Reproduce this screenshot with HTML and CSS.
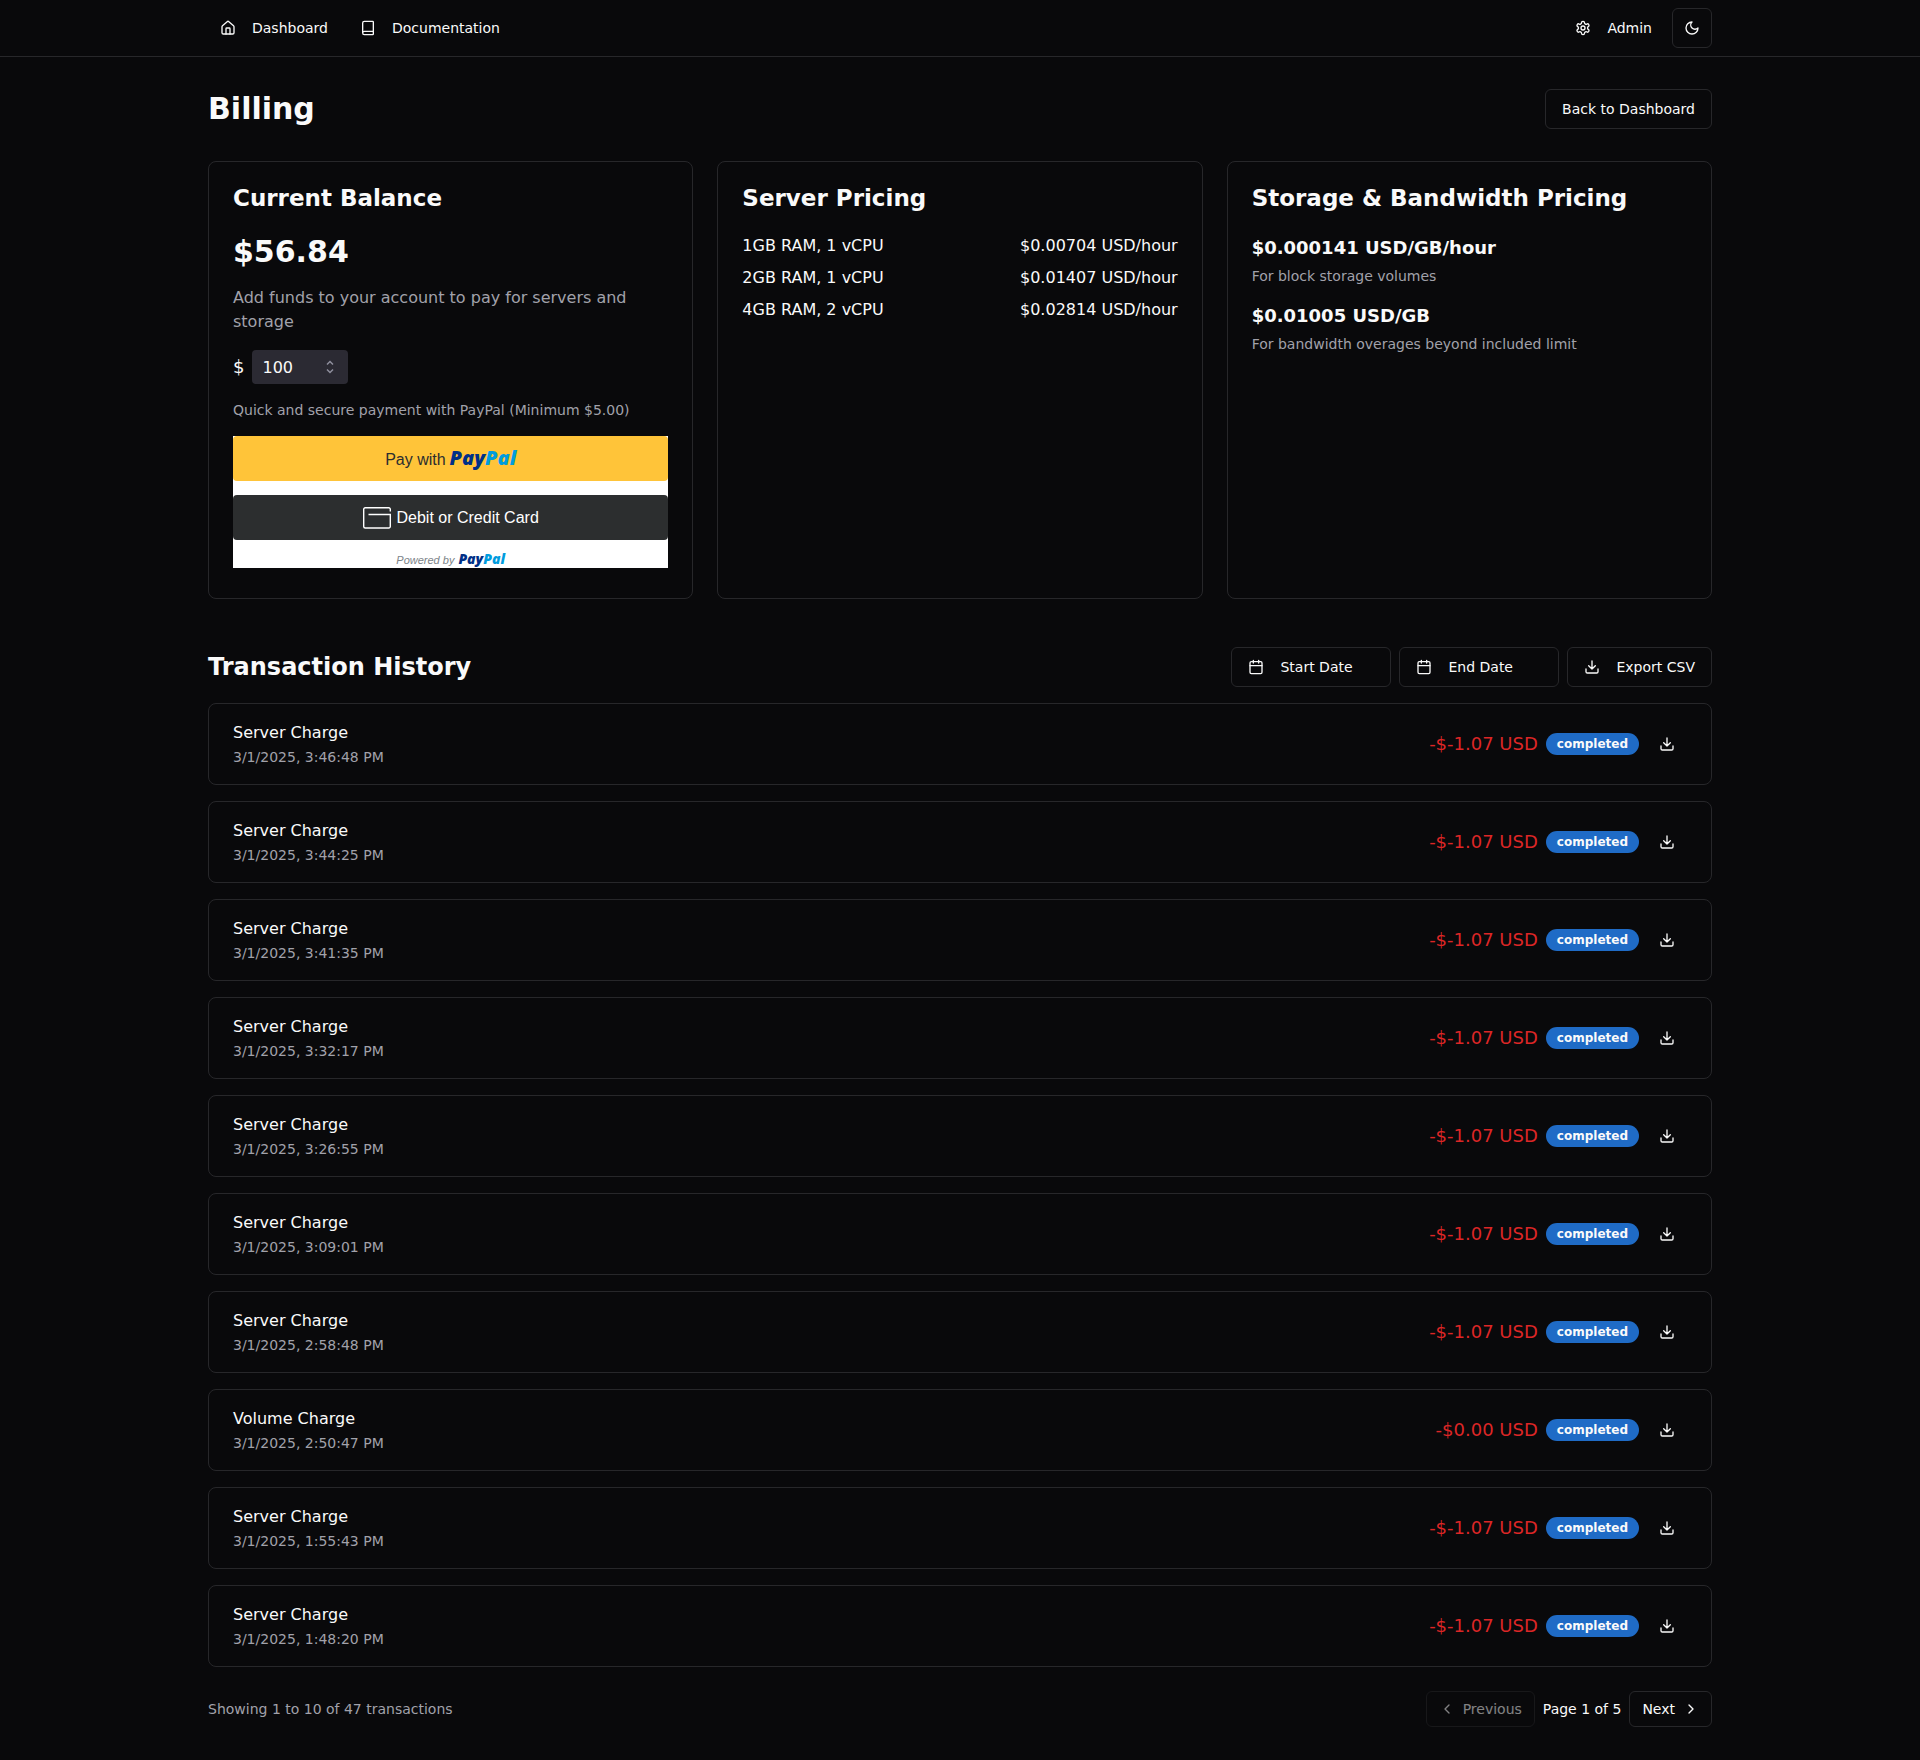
FILE: index.html
```html
<!DOCTYPE html>
<html lang="en">
<head>
<meta charset="utf-8">
<meta name="viewport" content="width=device-width, initial-scale=1">
<title>Billing</title>
<link rel="stylesheet" href="styles.css">
</head>
<body>
<svg class="sprite" aria-hidden="true">
  <symbol id="i-house" viewBox="0 0 24 24"><path d="M15 21v-8a1 1 0 0 0-1-1h-4a1 1 0 0 0-1 1v8"/><path d="M3 10a2 2 0 0 1 .709-1.528l7-5.999a2 2 0 0 1 2.582 0l7 5.999A2 2 0 0 1 21 10v9a2 2 0 0 1-2 2H5a2 2 0 0 1-2-2z"/></symbol>
  <symbol id="i-book" viewBox="0 0 24 24"><path d="M4 19.500v-15A2.500 2.500 0 0 1 6.500 2H19a1 1 0 0 1 1 1v18a1 1 0 0 1-1 1H6.500a1 1 0 0 1 0-5H20"/></symbol>
  <symbol id="i-settings" viewBox="0 0 24 24"><path d="M12.220 2h-.44a2 2 0 0 0-2 2v.18a2 2 0 0 1-1 1.730l-.43.25a2 2 0 0 1-2 0l-.15-.08a2 2 0 0 0-2.730.73l-.22.38a2 2 0 0 0 .73 2.730l.15.1a2 2 0 0 1 1 1.720v.51a2 2 0 0 1-1 1.740l-.15.09a2 2 0 0 0-.73 2.730l.22.38a2 2 0 0 0 2.730.73l.15-.08a2 2 0 0 1 2 0l.43.25a2 2 0 0 1 1 1.730V20a2 2 0 0 0 2 2h.44a2 2 0 0 0 2-2v-.18a2 2 0 0 1 1-1.730l.43-.25a2 2 0 0 1 2 0l.15.08a2 2 0 0 0 2.730-.73l.22-.39a2 2 0 0 0-.73-2.730l-.15-.08a2 2 0 0 1-1-1.740v-.5a2 2 0 0 1 1-1.740l.15-.09a2 2 0 0 0 .73-2.730l-.22-.38a2 2 0 0 0-2.730-.73l-.15.08a2 2 0 0 1-2 0l-.43-.25a2 2 0 0 1-1-1.730V4a2 2 0 0 0-2-2z"/><circle cx="12" cy="12" r="3"/></symbol>
  <symbol id="i-moon" viewBox="0 0 24 24"><path d="M12 3a6 6 0 0 0 9 9 9 9 0 1 1-9-9Z"/></symbol>
  <symbol id="i-calendar" viewBox="0 0 24 24"><path d="M8 2v4M16 2v4M3 10h18"/><rect x="3" y="4" width="18" height="18" rx="2"/></symbol>
  <symbol id="i-download" viewBox="0 0 24 24"><path d="M21 15v4a2 2 0 0 1-2 2H5a2 2 0 0 1-2-2v-4M7 10l5 5 5-5M12 15V3"/></symbol>
  <symbol id="i-left" viewBox="0 0 24 24"><path d="m15 18-6-6 6-6"/></symbol>
  <symbol id="i-right" viewBox="0 0 24 24"><path d="m9 18 6-6-6-6"/></symbol>
</svg>

<header class="topbar">
  <nav class="container topbar-inner" aria-label="Main">
    <a class="nav-link" href="#"><svg class="icon"><use href="#i-house"/></svg>Dashboard</a>
    <a class="nav-link" href="#"><svg class="icon"><use href="#i-book"/></svg>Documentation</a>
    <a class="nav-link push" href="#"><svg class="icon"><use href="#i-settings"/></svg>Admin</a>
    <button class="btn btn-icon" type="button" aria-label="Toggle theme"><svg class="icon"><use href="#i-moon"/></svg></button>
  </nav>
</header>

<main class="container main">
  <div class="page-head">
    <h1>Billing</h1>
    <a class="btn" href="#">Back to Dashboard</a>
  </div>

  <div class="cards">
    <section class="card">
      <h2 class="card-title">Current Balance</h2>
      <div class="stack">
        <p class="balance">$56.84</p>
        <p class="muted">Add funds to your account to pay for servers and storage</p>
        <div class="amount-row">
          <label class="currency" for="amount">$</label>
          <div class="amount-box">
            <input id="amount" class="amount-input" type="number" value="100" min="5">
            <svg class="spinner" viewBox="0 0 8 14" aria-hidden="true"><path d="M1 4.500l3-3 3 3M1 9.500l3 3 3-3"/></svg>
          </div>
        </div>
        <p class="muted small">Quick and secure payment with PayPal (Minimum $5.00)</p>
        <div class="paypal">
          <button class="pp-btn pp-gold" type="button">Pay with <span class="pp-logo"><span class="pp-navy">Pay</span><span class="pp-sky">Pal</span></span></button>
          <button class="pp-btn pp-dark" type="button"><svg class="pp-card" viewBox="0 0 28 22" aria-hidden="true"><path d="M5.500 7.500H27.300V19.500a1.500 1.500 0 0 1-1.500 1.500H2.200A1.500 1.500 0 0 1 .700 19.500V2.200A1.500 1.500 0 0 1 2.200 .700H25.800a1.500 1.500 0 0 1 1.500 1.500V4.500"/></svg>Debit or Credit Card</button>
          <p class="pp-powered">Powered by <span class="pp-logo pp-logo-small"><span class="pp-navy">Pay</span><span class="pp-sky">Pal</span></span></p>
        </div>
      </div>
    </section>

    <section class="card">
      <h2 class="card-title">Server Pricing</h2>
      <dl class="prices">
        <div><dt>1GB RAM, 1 vCPU</dt><dd>$0.00704 USD/hour</dd></div>
        <div><dt>2GB RAM, 1 vCPU</dt><dd>$0.01407 USD/hour</dd></div>
        <div><dt>4GB RAM, 2 vCPU</dt><dd>$0.02814 USD/hour</dd></div>
      </dl>
    </section>

    <section class="card">
      <h2 class="card-title">Storage &amp; Bandwidth Pricing</h2>
      <div class="stack">
        <div class="rate"><p class="rate-value">$0.000141 USD/GB/hour</p><p class="muted small">For block storage volumes</p></div>
        <div class="rate"><p class="rate-value">$0.01005 USD/GB</p><p class="muted small">For bandwidth overages beyond included limit</p></div>
      </div>
    </section>
  </div>

  <section class="history">
    <div class="history-head">
      <h2>Transaction History</h2>
      <div class="actions">
        <button class="btn btn-date" type="button"><svg class="icon"><use href="#i-calendar"/></svg>Start Date</button>
        <button class="btn btn-date" type="button"><svg class="icon"><use href="#i-calendar"/></svg>End Date</button>
        <button class="btn" type="button"><svg class="icon"><use href="#i-download"/></svg>Export CSV</button>
      </div>
    </div>

    <ul class="list">
      <li class="tx"><div class="tx-info"><p>Server Charge</p><p class="muted small">3/1/2025, 3:46:48 PM</p></div><div class="tx-side"><span class="tx-amount">-$-1.07 USD</span><span class="badge">completed</span><button class="btn-ghost" type="button" aria-label="Download invoice"><svg class="icon"><use href="#i-download"/></svg></button></div></li>
      <li class="tx"><div class="tx-info"><p>Server Charge</p><p class="muted small">3/1/2025, 3:44:25 PM</p></div><div class="tx-side"><span class="tx-amount">-$-1.07 USD</span><span class="badge">completed</span><button class="btn-ghost" type="button" aria-label="Download invoice"><svg class="icon"><use href="#i-download"/></svg></button></div></li>
      <li class="tx"><div class="tx-info"><p>Server Charge</p><p class="muted small">3/1/2025, 3:41:35 PM</p></div><div class="tx-side"><span class="tx-amount">-$-1.07 USD</span><span class="badge">completed</span><button class="btn-ghost" type="button" aria-label="Download invoice"><svg class="icon"><use href="#i-download"/></svg></button></div></li>
      <li class="tx"><div class="tx-info"><p>Server Charge</p><p class="muted small">3/1/2025, 3:32:17 PM</p></div><div class="tx-side"><span class="tx-amount">-$-1.07 USD</span><span class="badge">completed</span><button class="btn-ghost" type="button" aria-label="Download invoice"><svg class="icon"><use href="#i-download"/></svg></button></div></li>
      <li class="tx"><div class="tx-info"><p>Server Charge</p><p class="muted small">3/1/2025, 3:26:55 PM</p></div><div class="tx-side"><span class="tx-amount">-$-1.07 USD</span><span class="badge">completed</span><button class="btn-ghost" type="button" aria-label="Download invoice"><svg class="icon"><use href="#i-download"/></svg></button></div></li>
      <li class="tx"><div class="tx-info"><p>Server Charge</p><p class="muted small">3/1/2025, 3:09:01 PM</p></div><div class="tx-side"><span class="tx-amount">-$-1.07 USD</span><span class="badge">completed</span><button class="btn-ghost" type="button" aria-label="Download invoice"><svg class="icon"><use href="#i-download"/></svg></button></div></li>
      <li class="tx"><div class="tx-info"><p>Server Charge</p><p class="muted small">3/1/2025, 2:58:48 PM</p></div><div class="tx-side"><span class="tx-amount">-$-1.07 USD</span><span class="badge">completed</span><button class="btn-ghost" type="button" aria-label="Download invoice"><svg class="icon"><use href="#i-download"/></svg></button></div></li>
      <li class="tx"><div class="tx-info"><p>Volume Charge</p><p class="muted small">3/1/2025, 2:50:47 PM</p></div><div class="tx-side"><span class="tx-amount">-$0.00 USD</span><span class="badge">completed</span><button class="btn-ghost" type="button" aria-label="Download invoice"><svg class="icon"><use href="#i-download"/></svg></button></div></li>
      <li class="tx"><div class="tx-info"><p>Server Charge</p><p class="muted small">3/1/2025, 1:55:43 PM</p></div><div class="tx-side"><span class="tx-amount">-$-1.07 USD</span><span class="badge">completed</span><button class="btn-ghost" type="button" aria-label="Download invoice"><svg class="icon"><use href="#i-download"/></svg></button></div></li>
      <li class="tx"><div class="tx-info"><p>Server Charge</p><p class="muted small">3/1/2025, 1:48:20 PM</p></div><div class="tx-side"><span class="tx-amount">-$-1.07 USD</span><span class="badge">completed</span><button class="btn-ghost" type="button" aria-label="Download invoice"><svg class="icon"><use href="#i-download"/></svg></button></div></li>
    </ul>

    <div class="pager">
      <p class="muted small">Showing 1 to 10 of 47 transactions</p>
      <div class="actions">
        <button class="btn btn-sm" type="button" disabled><svg class="icon"><use href="#i-left"/></svg>Previous</button>
        <span class="small">Page 1 of 5</span>
        <button class="btn btn-sm" type="button">Next<svg class="icon"><use href="#i-right"/></svg></button>
      </div>
    </div>
  </section>
</main>
</body>
</html>
```
FILE: styles.css
```css
:root {
  --bg: #09090b;
  --fg: #fafafa;
  --muted: #a1a1aa;
  --border: #27272a;
}

*, *::before, *::after { box-sizing: border-box; }

body {
  margin: 0;
  background: var(--bg);
  color: var(--fg);
  font: 16px/24px "DejaVu Sans", sans-serif;
}

h1, h2, p, ul, dl, dd { margin: 0; padding: 0; }
ul { list-style: none; }
a { color: inherit; text-decoration: none; }
button, input { font: inherit; color: inherit; }

.sprite { display: none; }
.icon {
  width: 16px;
  height: 16px;
  flex: none;
  fill: none;
  stroke: currentColor;
  stroke-width: 2;
  stroke-linecap: round;
  stroke-linejoin: round;
}

.container {
  width: 100%;
  max-width: 1536px;
  margin: 0 auto;
  padding: 0 16px;
}
.muted { color: var(--muted); }
.small { font-size: 14px; line-height: 20px; }

/* Navigation */
.topbar { border-bottom: 1px solid var(--border); }
.topbar-inner {
  display: flex;
  align-items: center;
  gap: 8px;
  min-height: 56px;
}
.nav-link {
  display: flex;
  align-items: center;
  gap: 16px;
  height: 36px;
  padding: 0 12px;
  font-size: 14px;
  line-height: 20px;
}
.push { margin-left: auto; }

/* Buttons */
.btn {
  display: inline-flex;
  align-items: center;
  justify-content: center;
  gap: 16px;
  height: 40px;
  padding: 0 16px;
  border: 1px solid var(--border);
  border-radius: 6px;
  background: var(--bg);
  font-size: 14px;
  line-height: 20px;
  white-space: nowrap;
}
.btn-icon { width: 40px; padding: 0; }
.btn-date { width: 160px; justify-content: flex-start; }
.btn-sm { height: 36px; padding: 0 12px; gap: 8px; }
.btn:disabled { opacity: .5; }
.btn-ghost {
  display: flex;
  align-items: center;
  justify-content: center;
  width: 40px;
  height: 40px;
  padding: 0;
  border: 0;
  border-radius: 6px;
  background: none;
}

/* Page */
.main { padding-top: 32px; padding-bottom: 32px; }
.page-head, .history-head, .pager {
  display: flex;
  align-items: center;
  justify-content: space-between;
}
h1 { font-size: 30px; line-height: 36px; }
h2 { font-size: 24px; line-height: 32px; }

.cards {
  display: grid;
  grid-template-columns: repeat(3, minmax(0, 1fr));
  gap: 24px;
  margin-top: 32px;
}
.card {
  display: flex;
  flex-direction: column;
  gap: 24px;
  padding: 24px;
  border: 1px solid var(--border);
  border-radius: 8px;
}
.card-title { font-size: 23px; line-height: 24px; }
.stack { display: flex; flex-direction: column; gap: 16px; }
.balance { font-size: 30px; line-height: 36px; font-weight: 700; }

.amount-row { display: flex; align-items: center; gap: 8px; }
.currency { font-size: 18px; line-height: 28px; }
.amount-box { position: relative; }
.amount-input {
  display: block;
  width: 96px;
  height: 34px;
  padding: 0 24px 0 10px;
  border: 0;
  border-radius: 4px;
  background: #2b2a33;
  appearance: textfield;
}
.amount-input::-webkit-inner-spin-button { appearance: none; margin: 0; }
.spinner {
  position: absolute;
  top: 10px;
  right: 14px;
  width: 8px;
  height: 14px;
  fill: none;
  stroke: #8f8f9d;
  stroke-width: 1.5;
}

/* PayPal */
.paypal {
  margin-bottom: 6px;
  background: #fff;
  font-family: "Liberation Sans", Arial, sans-serif;
}
.pp-btn {
  display: flex;
  align-items: center;
  justify-content: center;
  gap: 4px;
  width: 100%;
  height: 45px;
  padding: 0;
  border: 0;
  border-radius: 4px;
}
.pp-gold { align-items: baseline; padding-top: 10px; background: #ffc439; color: #2c2e2f; }
.pp-dark { margin-top: 14px; gap: 6px; background: #2c2e2f; color: #fff; }
.pp-card { width: 28px; height: 22px; fill: none; stroke: #fff; stroke-width: 1.4; }
.pp-powered {
  display: flex;
  align-items: baseline;
  justify-content: center;
  gap: 4px;
  height: 28px;
  padding-top: 12px;
  color: #7b8388;
  font-size: 11px;
  font-style: italic;
  line-height: 14px;
}
.pp-logo { font: italic 800 20px/24px "Open Sans", sans-serif; }
.pp-logo-small { font-size: 14px; line-height: 14px; }
.pp-navy { color: #003087; }
.pp-sky { color: #009cde; }

.prices { display: flex; flex-direction: column; gap: 8px; }
.prices > div { display: flex; justify-content: space-between; }
.rate { display: flex; flex-direction: column; gap: 4px; }
.rate-value { font-size: 18px; line-height: 28px; font-weight: 700; }

/* Transactions */
.history { margin-top: 48px; }
.actions { display: flex; align-items: center; gap: 8px; }
.list {
  display: flex;
  flex-direction: column;
  gap: 16px;
  margin-top: 16px;
}
.tx {
  display: flex;
  align-items: center;
  justify-content: space-between;
  min-height: 82px;
  padding: 16px 24px;
  border: 1px solid var(--border);
  border-radius: 8px;
}
.tx-info { display: flex; flex-direction: column; gap: 2px; }
.tx-side { display: flex; align-items: center; gap: 8px; }
.tx-amount { color: #dc2626; font-size: 18px; line-height: 28px; }
.badge {
  padding: 3px 11px;
  border-radius: 11px;
  background: #1f6bc6;
  font-size: 12px;
  line-height: 16px;
  font-weight: 700;
}
.pager { margin-top: 24px; }
```
